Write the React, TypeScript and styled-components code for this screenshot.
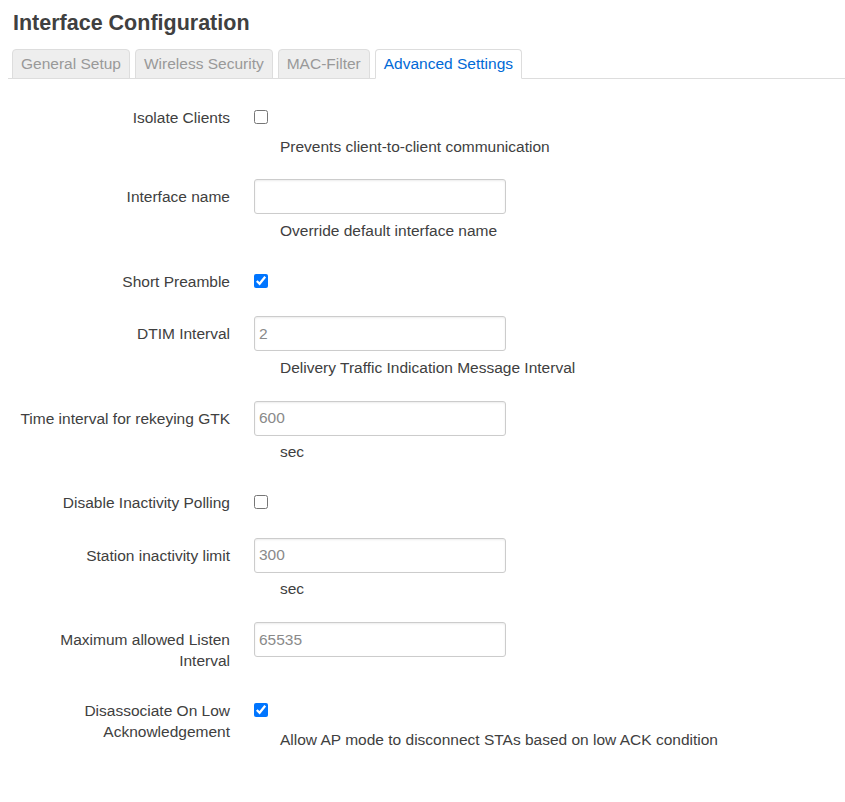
import styled, { createGlobalStyle } from "styled-components";

const GlobalStyle = createGlobalStyle`
  html, body {
    margin: 0;
    padding: 0;
    background: #fff;
  }
  body {
    font-family: "Liberation Sans", Arial, sans-serif;
    font-size: 15.5px;
    color: #404040;
  }
`;

type Field = {
  label: string;
  kind: "checkbox" | "text";
  checked?: boolean;
  placeholder?: string;
  desc?: string;
};

const fields: Field[] = [
  {
    label: "Isolate Clients",
    kind: "checkbox",
    desc: "Prevents client-to-client communication",
  },
  {
    label: "Interface name",
    kind: "text",
    desc: "Override default interface name",
  },
  { label: "Short Preamble", kind: "checkbox", checked: true },
  {
    label: "DTIM Interval",
    kind: "text",
    placeholder: "2",
    desc: "Delivery Traffic Indication Message Interval",
  },
  {
    label: "Time interval for rekeying GTK",
    kind: "text",
    placeholder: "600",
    desc: "sec",
  },
  { label: "Disable Inactivity Polling", kind: "checkbox" },
  {
    label: "Station inactivity limit",
    kind: "text",
    placeholder: "300",
    desc: "sec",
  },
  {
    label: "Maximum allowed Listen Interval",
    kind: "text",
    placeholder: "65535",
  },
  {
    label: "Disassociate On Low Acknowledgement",
    kind: "checkbox",
    checked: true,
    desc: "Allow AP mode to disconnect STAs based on low ACK condition",
  },
];

const tabs = ["General Setup", "Wireless Security", "MAC-Filter", "Advanced Settings"];

const App = () => {
  return (
    <>
      <GlobalStyle />
      <StPage>
        <StTitle>Interface Configuration</StTitle>
        <StTabs>
          {tabs.map((tab) => (
            <StTab key={tab} $active={tab === "Advanced Settings"}>
              {tab}
            </StTab>
          ))}
        </StTabs>
        <StForm>
          {fields.map((field) => (
            <StRow key={field.label}>
              <StLabel>{field.label}</StLabel>
              <StField>
                <StControl>
                  {field.kind === "checkbox" ? (
                    <StCheck type="checkbox" defaultChecked={field.checked} />
                  ) : (
                    <StInput type="text" placeholder={field.placeholder} />
                  )}
                </StControl>
                {field.desc && (
                  <StDesc $tight={field.kind === "checkbox"}>{field.desc}</StDesc>
                )}
              </StField>
            </StRow>
          ))}
        </StForm>
      </StPage>
    </>
  );
};

export default App;

const StPage = styled.div`
  padding: 10px 0 0 8px;
  min-height: 792px;
`;

const StTitle = styled.h2`
  margin: 0 0 13px 5px;
  font-size: 21.5px;
  line-height: 26px;
  font-weight: bold;
  color: #404040;
`;

const StTabs = styled.ul`
  display: flex;
  gap: 5px;
  margin: 0;
  padding: 0 0 0 4px;
  list-style: none;
  border-bottom: 1px solid #ddd;
`;

const StTab = styled.li<{ $active: boolean }>`
  padding: 0 8px;
  line-height: 28px;
  margin-bottom: -1px;
  border: 1px solid #ddd;
  border-bottom-color: ${(p) => (p.$active ? "#fff" : "#ddd")};
  border-radius: 4px 4px 0 0;
  background: ${(p) => (p.$active ? "#fff" : "#eee")};
  color: ${(p) => (p.$active ? "#0069d6" : "#999")};
  white-space: nowrap;
`;

const StForm = styled.div`
  padding-top: 20.5px;
`;

const StRow = styled.div`
  display: flex;
  align-items: flex-start;
  margin-bottom: 17.5px;
`;

const StLabel = styled.div`
  width: 222px;
  flex: none;
  margin-right: 24px;
  padding: 7px 0 4px;
  line-height: 21px;
  text-align: right;
  color: #404040;
`;

const StField = styled.div`
  display: flex;
  flex-direction: column;
`;

const StControl = styled.div`
  height: 35px;
  display: flex;
  align-items: center;
`;

const StCheck = styled.input`
  width: 14px;
  height: 14px;
  margin: 0 0 1px;
`;

const StInput = styled.input`
  box-sizing: border-box;
  width: 252px;
  height: 35px;
  padding: 0 4px;
  border: 1px solid #ccc;
  border-radius: 3px;
  box-shadow: inset 0 1px 2px rgba(0, 0, 0, 0.08);
  font-family: "Liberation Sans", Arial, sans-serif;
  font-size: 15.5px;
  color: #404040;
  outline: none;
  &::placeholder {
    color: #8a8a8a;
  }
`;

const StDesc = styled.div<{ $tight: boolean }>`
  padding: ${(p) => (p.$tight ? "0 0 4px" : "4.5px 0")};
  margin-left: 26px;
  line-height: 23px;
  color: #404040;
  white-space: nowrap;
`;
